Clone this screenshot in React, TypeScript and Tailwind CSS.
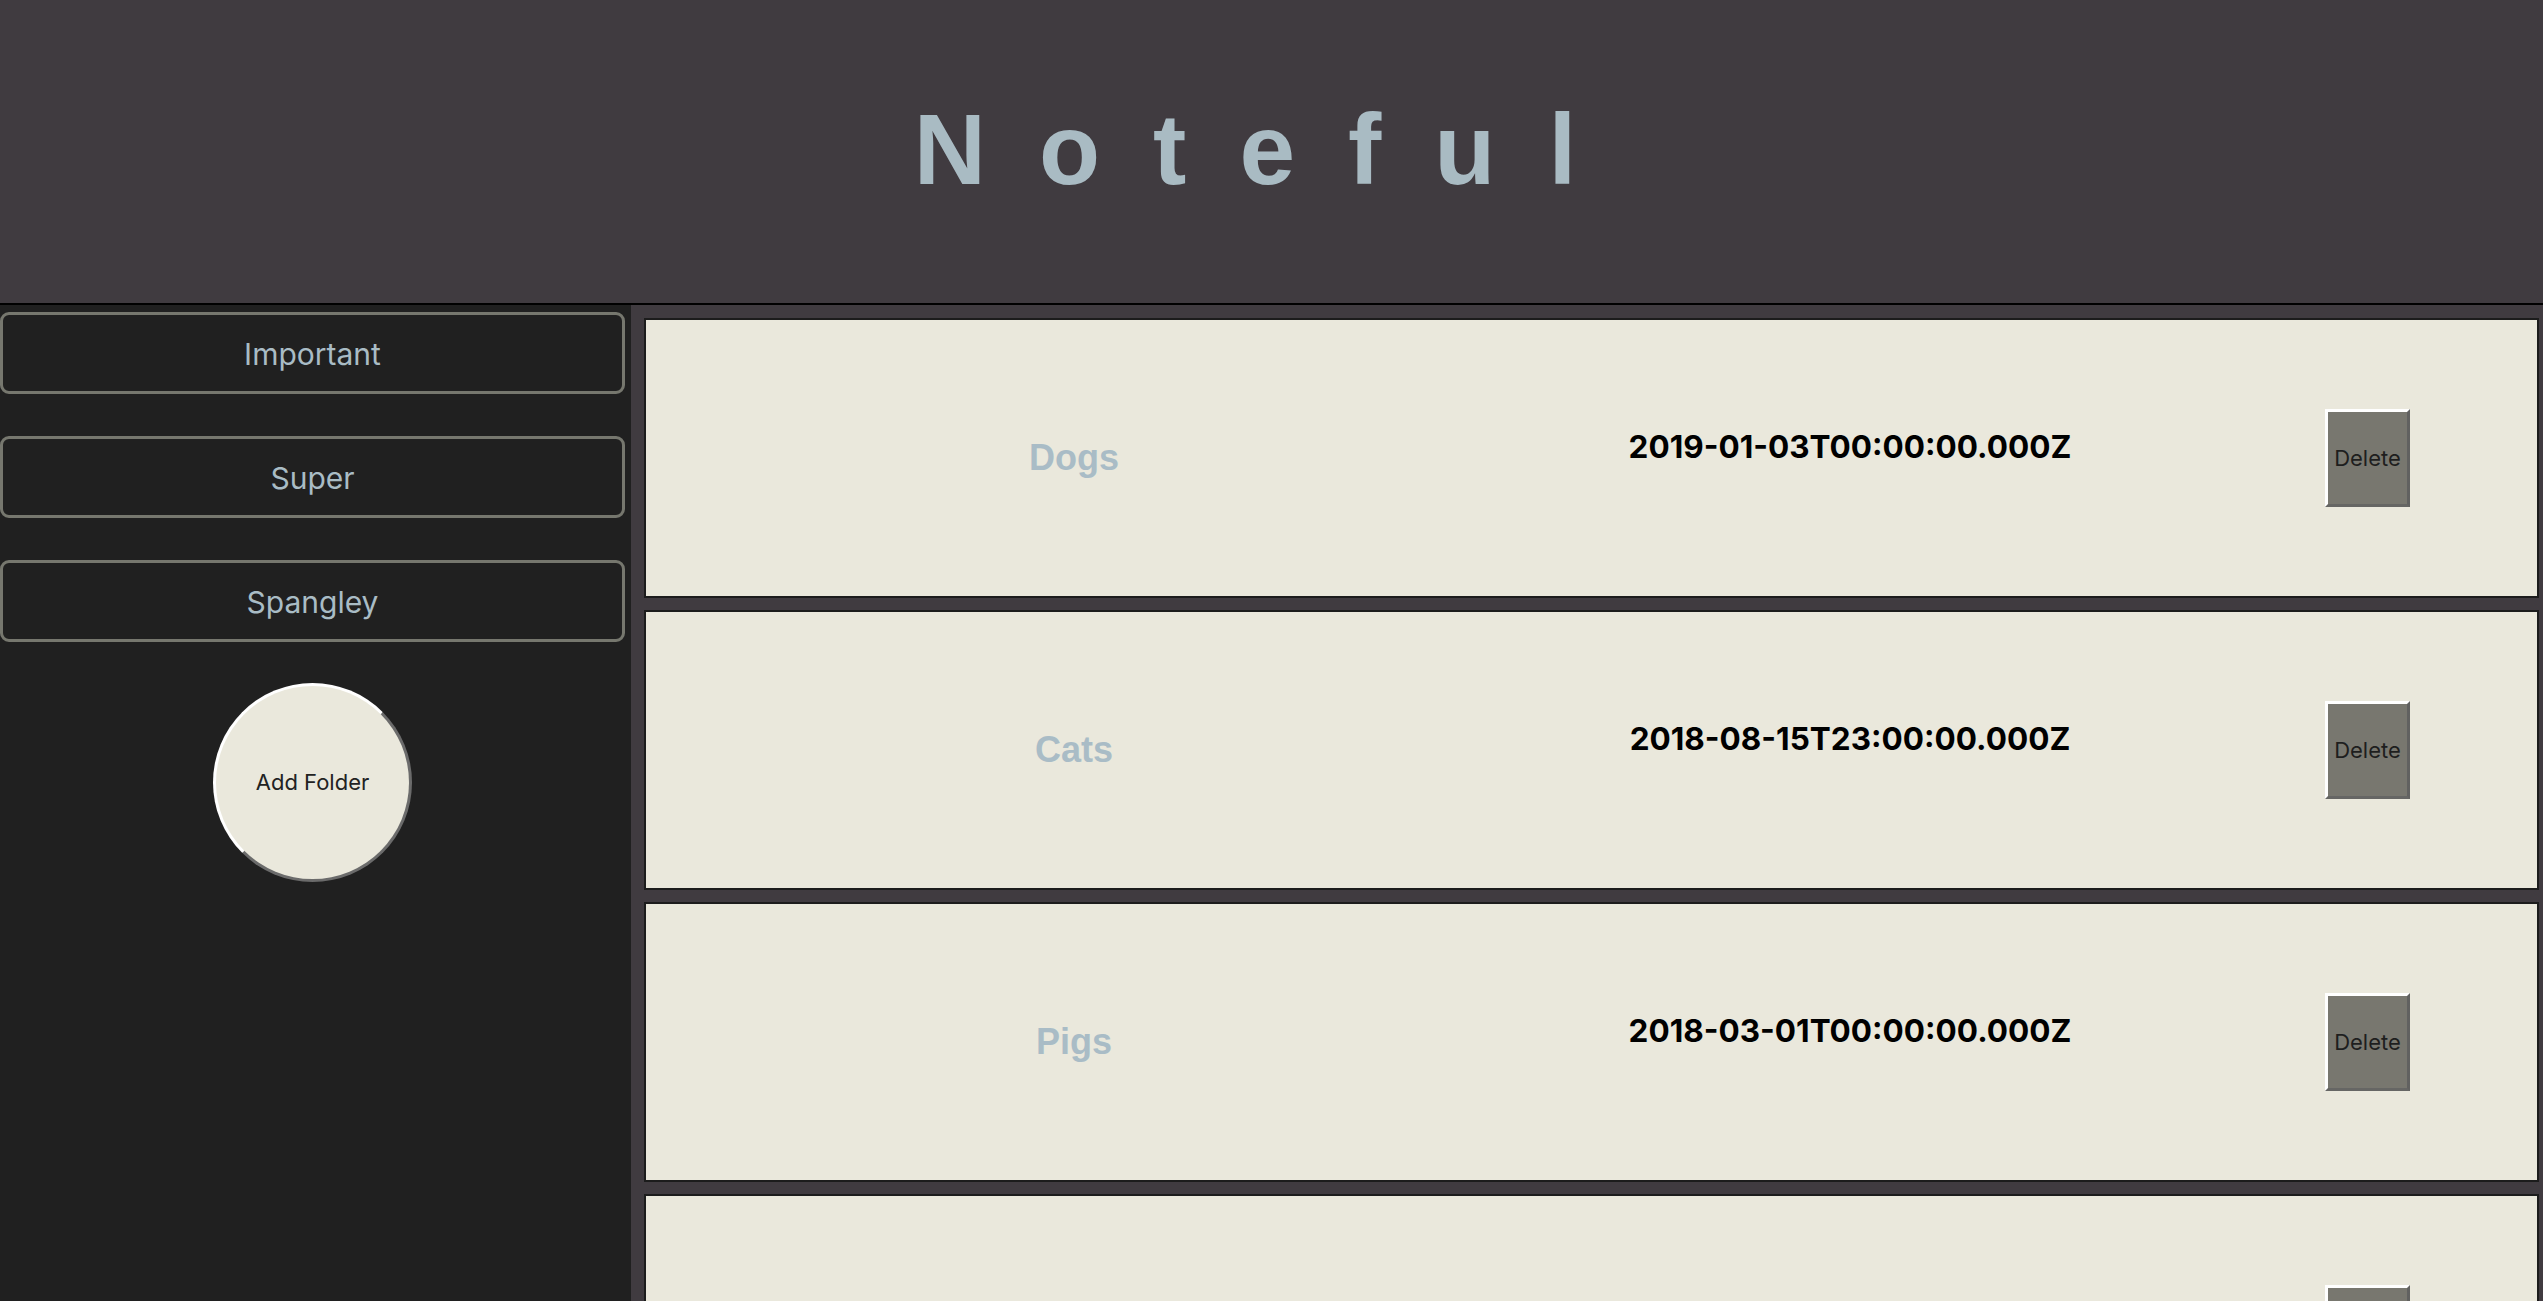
import React from 'react';

interface Note {
  id: string;
  name: string;
  modified: string;
}

const folders = ['Important', 'Super', 'Spangley'];

const notes: Note[] = [
  { id: 'n1', name: 'Dogs', modified: '2019-01-03T00:00:00.000Z' },
  { id: 'n2', name: 'Cats', modified: '2018-08-15T23:00:00.000Z' },
  { id: 'n3', name: 'Pigs', modified: '2018-03-01T00:00:00.000Z' },
  { id: 'n4', name: 'Birds', modified: '2019-01-04T00:00:00.000Z' },
  { id: 'n5', name: 'Bears', modified: '2018-07-12T23:00:00.000Z' },
];

const NoteCard: React.FC<{ note: Note }> = ({ note }) => (
  <div className="h-[280px] mb-[12px] border-2 border-[#1c1c1c] bg-[#eae8dc] grid grid-cols-[856px_696px_1fr] items-center">
    <h2 className="text-center text-[36px] font-bold text-[#a9bcc6] font-['Liberation_Sans',Arial,sans-serif]">
      {note.name}
    </h2>
    <p className="mb-[22px] text-center text-[31.5px] font-bold text-black font-['Inter',sans-serif]">
      {note.modified}
    </p>
    <div className="flex justify-center">
      <button className="w-[85px] h-[98px] bg-[#78776f] border-[3px] border-t-white border-l-white border-r-[#616160] border-b-[#666664] text-[22px] text-[#1e1e1e] font-['Inter',sans-serif]">
        Delete
      </button>
    </div>
  </div>
);

export default function App() {
  return (
    <div className="min-h-screen bg-[#403b40]">
      {/* Header */}
      <header className="h-[305px] border-b-2 border-black flex items-center justify-center pb-[6px]">
        <h1 className="text-[100px] leading-none font-bold tracking-[53px] text-[#a9bbc3] font-['Liberation_Sans',Arial,sans-serif]">
          Noteful
        </h1>
      </header>

      <div className="flex">
        {/* Sidebar */}
        <nav className="w-[631px] shrink-0 bg-[#202020] pt-[7px] min-h-[996px]">
          <div className="w-[625px] flex flex-col">
            {folders.map((f) => (
              <button
                key={f}
                className="h-[82px] mb-[42px] rounded-[9px] border-[3px] border-[#76776e] bg-[#202020] pt-[2px] text-[30px] text-[#a9bcc5] font-['Inter',sans-serif]"
              >
                {f}
              </button>
            ))}
            <button className="self-center -mt-px w-[199px] h-[199px] rounded-full bg-[#eae8dc] border-[3px] border-t-white border-l-white border-r-[#6b6b6b] border-b-[#6b6b6b] text-[22px] text-[#222222] font-['Inter',sans-serif]">
              Add Folder
            </button>
          </div>
        </nav>

        {/* Notes */}
        <main className="flex-1 pt-[13px] pl-[13px] pr-[4px]">
          {notes.map((n) => (
            <NoteCard key={n.id} note={n} />
          ))}
        </main>
      </div>
    </div>
  );
}
